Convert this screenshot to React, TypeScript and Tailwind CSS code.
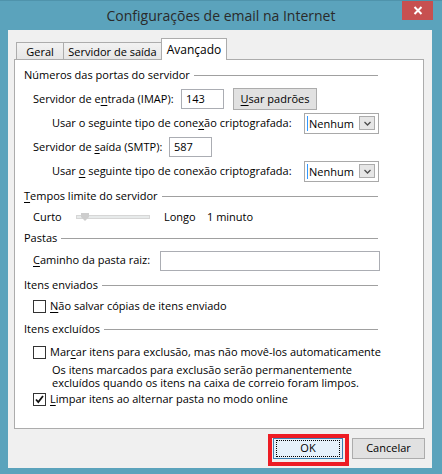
import type { ReactNode } from 'react'

const FONT = { fontFamily: '"Open Sans", "Noto Sans", sans-serif' }

function U({ children }: { children: ReactNode }) {
  return <span className="underline underline-offset-[2px] decoration-1">{children}</span>
}

function Header({ children }: { children: ReactNode }) {
  return (
    <div className="flex w-[354px] items-center">
      <span className="whitespace-nowrap">{children}</span>
      <div className="ml-[4px] h-px flex-1 bg-[#a0a0a0]" />
    </div>
  )
}

function TextBox({ value, className }: { value?: string; className: string }) {
  return (
    <div className={`flex items-center border border-[#abadb3] bg-white pl-[4px] ${className}`}>
      {value}
    </div>
  )
}

function Select() {
  return (
    <div className="flex h-[21px] w-[75px] items-center border border-[#a9a9a9] bg-white pl-[2px] pr-[3px]">
      <div className="flex h-[15px] flex-1 items-center border-l border-[#3399ff] pl-[1px] leading-none">
        Nenhum
      </div>
      <div className="flex h-[14px] w-[16px] items-center justify-center border border-[#acacac] bg-[#e6e6e6]">
        <svg width="7" height="5" viewBox="0 0 7 5">
          <path d="M0.5 1 L3.5 4 L6.5 1" fill="none" stroke="#4d4d4d" strokeWidth="1.3" />
        </svg>
      </div>
    </div>
  )
}

function Checkbox({ checked }: { checked?: boolean }) {
  return (
    <div className="mr-[4px] flex h-[13px] w-[13px] shrink-0 items-center justify-center border border-[#333333] bg-white">
      {checked && (
        <svg width="11" height="11" viewBox="0 0 11 11">
          <path d="M2 5.5 L4.3 8 L9 2" fill="none" stroke="#111" strokeWidth="1.8" />
        </svg>
      )}
    </div>
  )
}

function Tab({ label, active, className }: { label: string; active?: boolean; className: string }) {
  if (active) {
    return (
      <div className={`relative z-10 -mb-px flex h-[22px] items-center justify-center border border-b-0 border-[#acacac] bg-white text-[12px] ${className}`}>
        {label}
      </div>
    )
  }
  return (
    <div className={`flex h-[17px] items-center justify-center border border-b-0 border-[#acacac] bg-gradient-to-b from-[#f2f2f2] to-[#e6e6e6] pt-[2px] ${className}`}>
      {label}
    </div>
  )
}

export default function App() {
  return (
    <div
      className="h-[474px] w-[442px] overflow-hidden whitespace-nowrap border-t border-[#4f93ab] bg-[#5ba3bc] text-[11px] text-black"
      style={FONT}
    >
      {/* title bar */}
      <div className="relative flex h-[29px] items-center justify-center">
        <span className="text-[14px] text-[#2a2a2a]">Configurações de email na Internet</span>
        <div className="absolute right-[9px] top-[-1px] flex h-[20px] w-[31px] items-center justify-center bg-[#c75050]">
          <svg width="10" height="9" viewBox="0 0 10 9">
            <path d="M1.5 1 L8.5 8 M8.5 1 L1.5 8" stroke="#fff" strokeWidth="2" />
          </svg>
        </div>
      </div>

      {/* client area */}
      <div className="ml-[8px] flex h-[438px] w-[424px] flex-col bg-[#f0f0f0] pt-[8px]">
        <div className="ml-[8px] flex h-[21px] items-end">
          <Tab label="Geral" className="w-[48px]" />
          <Tab label="Servidor de saída" className="w-[99px] -ml-px" />
          <Tab label="Avançado" active className="w-[66px] -ml-px" />
        </div>

        <div className="ml-[6px] flex h-[370px] w-[410px] flex-col border border-[#acacac] bg-white pl-[9px] pt-[3px]">
          <div className="flex h-[24px] items-center">
            <Header>Números das portas do servidor</Header>
          </div>

          <div className="flex h-[24px] items-center pl-[9px]">
            <span className="w-[148px]">
              Servidor de e<U>n</U>trada (IMAP):
            </span>
            <TextBox value="143" className="h-[20px] w-[43px]" />
            <div className="ml-[9px] flex h-[22px] w-[84px] items-center justify-center border border-[#acacac] bg-[#e1e1e1]">
              <span>
                <U>U</U>sar padrões
              </span>
            </div>
          </div>

          <div className="flex h-[24px] items-center pl-[28px]">
            <span className="w-[252px]">
              Usar o seguinte tipo de cone<U>x</U>ão criptografada:
            </span>
            <Select />
          </div>

          <div className="flex h-[24px] items-center pl-[9px]">
            <span className="w-[136px]">
              Servidor de <U>s</U>aída (SMTP):
            </span>
            <TextBox value="587" className="h-[20px] w-[43px]" />
          </div>

          <div className="flex h-[24px] items-center pl-[28px]">
            <span className="w-[252px]">
              Usar <U>o</U> seguinte tipo de conexão criptografada:
            </span>
            <Select />
          </div>

          <div className="flex h-[26px] items-center">
            <Header>
              <U>T</U>empos limite do servidor
            </Header>
          </div>

          <div className="flex h-[16px] items-center pl-[9px]">
            <span className="w-[43px]">Curto</span>
            <div className="relative h-[4px] w-[74px] border border-[#d6d6d6] bg-[#e7eaea]">
              <svg className="absolute left-[4px] top-[-3px]" width="8" height="8" viewBox="0 0 8 8">
                <path d="M0 0 H8 V4 L4 8 L0 4 Z" fill="#cdcdcd" />
              </svg>
            </div>
            <span className="ml-[14px] w-[43px]">Longo</span>
            <span>1 minuto</span>
          </div>

          <div className="flex h-[26px] items-center">
            <Header>Pastas</Header>
          </div>

          <div className="flex h-[19px] items-center pl-[9px]">
            <span className="w-[127px]">
              <U>C</U>aminho da pasta raiz:
            </span>
            <TextBox className="h-[20px] w-[220px]" />
          </div>

          <div className="flex h-[30px] items-center">
            <Header>Itens enviados</Header>
          </div>

          <div className="flex h-[12px] items-center pl-[9px]">
            <Checkbox />
            <span>
              <U>N</U>ão salvar cópias de itens enviado
            </span>
          </div>

          <div className="flex h-[34px] items-center">
            <Header>Itens excluídos</Header>
          </div>

          <div className="flex h-[12px] items-center pl-[9px]">
            <Checkbox />
            <span>
              Mar<U>c</U>ar itens para exclusão, mas não movê-los automaticamente
            </span>
          </div>

          <div className="flex h-[36px] flex-col justify-center pl-[28px] leading-[13px]">
            <span>Os itens marcados para exclusão serão permanentemente</span>
            <span>excluídos quando os itens na caixa de correio foram limpos.</span>
          </div>

          <div className="flex h-[10px] items-center pl-[9px]">
            <Checkbox checked />
            <span>
              <U>L</U>impar itens ao alternar pasta no modo online
            </span>
          </div>
        </div>

        {/* buttons */}
        <div className="mt-[9px] flex justify-end pr-[7px]">
          <div className="relative">
            <div className="flex h-[21px] w-[70px] items-center justify-center border border-[#3c7fb1] bg-[#e5f1fb]">
              <div className="flex h-[17px] w-[64px] items-center justify-center border border-dotted border-black">
                OK
              </div>
            </div>
            <div className="absolute left-[-5px] top-[-4px] h-[32px] w-[81px] border-[4px] border-[#ed1c24]" />
          </div>
          <div className="ml-[9px] flex h-[21px] w-[73px] items-center justify-center border border-[#acacac] bg-[#e1e1e1]">
            Cancelar
          </div>
        </div>
      </div>
    </div>
  )
}
